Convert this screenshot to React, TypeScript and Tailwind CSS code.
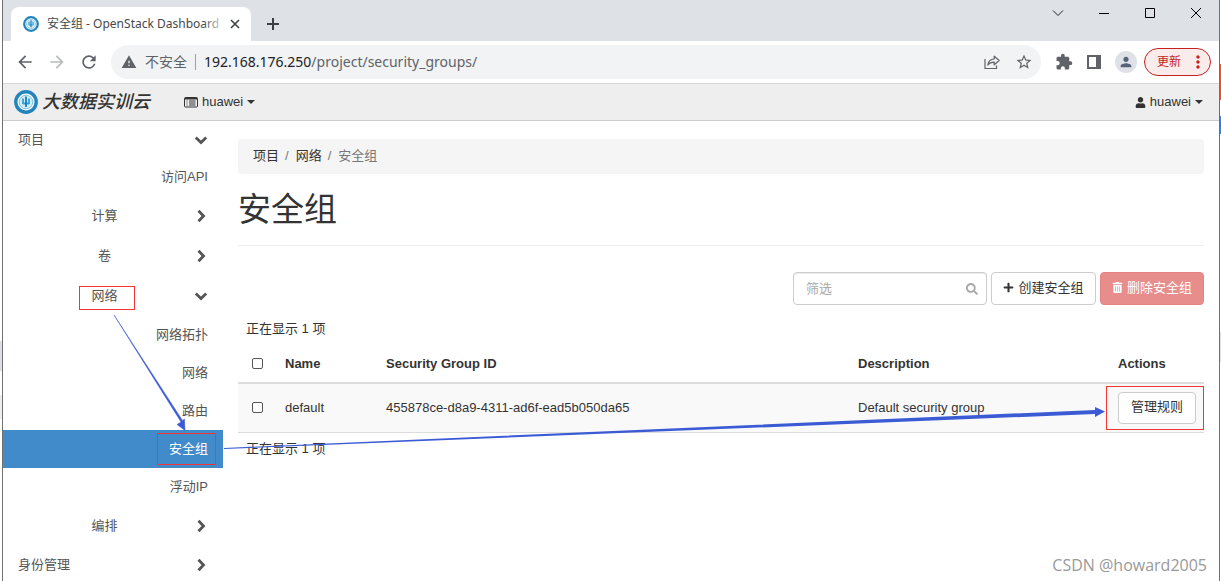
import React from 'react'
import { FaPlus, FaSearch, FaTrashAlt, FaUser } from 'react-icons/fa'
import {
  MdArrowBack,
  MdArrowForward,
  MdExtension,
  MdMoreVert,
  MdPerson,
  MdRefresh,
  MdStarOutline,
  MdWarning,
} from 'react-icons/md'

interface INavItem {
  label: string
  level: 'top' | 'group' | 'leaf'
  open?: boolean
  active?: boolean
  marked?: boolean
}

const navItems: INavItem[] = [
  { label: '项目', level: 'top', open: true },
  { label: '访问API', level: 'leaf' },
  { label: '计算', level: 'group' },
  { label: '卷', level: 'group' },
  { label: '网络', level: 'group', open: true, marked: true },
  { label: '网络拓扑', level: 'leaf' },
  { label: '网络', level: 'leaf' },
  { label: '路由', level: 'leaf' },
  { label: '安全组', level: 'leaf', active: true, marked: true },
  { label: '浮动IP', level: 'leaf' },
  { label: '编排', level: 'group' },
  { label: '身份管理', level: 'top' },
]

const groups = [
  {
    id: '455878ce-d8a9-4311-ad6f-ead5b050da65',
    name: 'default',
    description: 'Default security group',
  },
]

const Logo: React.FC<{ className: string }> = ({ className }) => (
  <svg viewBox="0 0 24 24" className={className} aria-hidden="true">
    <circle cx="12" cy="12" r="10.2" fill="#fff" stroke="#2484bd" strokeWidth="3.4" />
    <circle cx="12" cy="12" r="6.800" fill="#d3ecf7" stroke="#7cc3e4" strokeWidth="1" />
    <path d="M9 8.500v5.500M15 8.500v5.500M9 13.500h6" fill="none" stroke="#2ba3da" strokeWidth="1.8" />
    <path d="M12 6.500v10.500" stroke="#1b79b5" strokeWidth="1.8" />
  </svg>
)

const ListIcon = () => (
  <svg viewBox="0 0 14 12" className="h-3 w-3.5" fill="none" stroke="#333" aria-hidden="true">
    <rect x=".5" y="1.5" width="13" height="9.5" rx="1" />
    <path d="M1 2.5h12" strokeWidth="2" />
    <path d="M2.500 5h1M5 5h6.500M2.500 7h1M5 7h6.500M2.500 9h1M5 9h6.500" />
  </svg>
)

const ShareIcon = () => (
  <svg viewBox="0 0 18 18" className="size-[18px]" fill="none" stroke="#5f6368" strokeWidth="1.2" aria-hidden="true">
    <path d="M2 6v9.500h11.500v-3" />
    <path d="M4.800 12c.5-3.700 2.600-5.800 6.400-6V3.200L16.200 7.500l-5 4.300V9.200c-3 0-5 .8-6.400 2.800z" strokeLinejoin="round" />
  </svg>
)

const Chevron: React.FC<{ open?: boolean }> = ({ open }) => (
  <svg viewBox="0 0 14 14" className="size-3.5" fill="none" stroke="#555" strokeWidth="2.8" aria-hidden="true">
    <path d={open ? 'M1.800 4.500l5.200 5 5.200-5' : 'M4.500 1.800l5 5.200-5 5.200'} />
  </svg>
)

const Caret = () => (
  <svg viewBox="0 0 8 4" className="h-1 w-2" fill="#333" aria-hidden="true">
    <path d="M0 0h8L4 4z" />
  </svg>
)

const TitleBar = () => (
  <div className="flex h-[41px] shrink-0 items-end bg-[#dee1e6] pl-2">
    <div className="flex h-[34px] w-60 items-center rounded-t-lg bg-white pl-3 pr-2 text-xs text-[#45484c]">
      <Logo className="size-4 shrink-0" />
      <span className="relative ml-2 flex-1 overflow-hidden whitespace-nowrap">
        安全组 - OpenStack Dashboard
        <span className="absolute inset-y-0 right-0 w-6 bg-linear-to-r from-transparent to-white" />
      </span>
      <button aria-label="Close tab" className="p-[3px]">
        <svg viewBox="0 0 10 10" className="size-2.5" stroke="#3c4043" strokeWidth="1.6">
          <path d="M1 1l8 8M9 1l-8 8" />
        </svg>
      </button>
    </div>
    <button aria-label="New tab" className="flex h-[34px] w-11 items-center justify-center">
      <svg viewBox="0 0 12 12" className="size-3" stroke="#3c4043" strokeWidth="2">
        <path d="M6 0v12M0 6h12" />
      </svg>
    </button>
    <div className="ml-auto flex self-start text-black">
      <button aria-label="Search tabs" className="flex h-[26px] w-[46px] items-center justify-center">
        <svg viewBox="0 0 12 12" className="size-3" fill="none" stroke="#222">
          <path d="M1 3.500l5 5 5-5" />
        </svg>
      </button>
      <button aria-label="Minimize" className="flex h-[26px] w-[46px] items-center justify-center">
        <svg viewBox="0 0 10 10" className="size-2.5" stroke="#000">
          <path d="M0 5.500h10" />
        </svg>
      </button>
      <button aria-label="Maximize" className="flex h-[26px] w-[46px] items-center justify-center">
        <svg viewBox="0 0 10 10" className="size-2.5" fill="none" stroke="#000">
          <path d="M.5.5h9v9h-9z" />
        </svg>
      </button>
      <button aria-label="Close" className="flex h-[26px] w-[46px] items-center justify-center">
        <svg viewBox="0 0 10 10" className="size-2.5" stroke="#000">
          <path d="M0 0l10 10M10 0L0 10" />
        </svg>
      </button>
    </div>
  </div>
)

const AddressBar = () => (
  <div className="flex h-[43px] shrink-0 items-center border-b border-[#d5d7da] bg-white pl-3 pr-2 text-[#5f6368]">
    <div className="flex gap-3 pr-3">
      <button aria-label="Back"><MdArrowBack size={20} /></button>
      <button aria-label="Forward" className="text-[#b9bbbe]"><MdArrowForward size={20} /></button>
      <button aria-label="Reload"><MdRefresh size={20} /></button>
    </div>
    <div className="flex h-[34px] flex-1 items-center rounded-full bg-[#f1f3f4] pl-2.5 pr-2">
      <MdWarning size={16} />
      <span className="ml-2 text-sm">不安全</span>
      <span className="mx-2 h-4 w-px bg-[#9aa0a6]" />
      <span className="flex-1 text-sm">
        <span className="text-[#202124]">192.168.176.250</span>/project/security_groups/
      </span>
      <button aria-label="Share" className="mr-3.5"><ShareIcon /></button>
      <button aria-label="Bookmark"><MdStarOutline size={18} /></button>
    </div>
    <div className="flex items-center gap-3.5 pl-3.5">
      <button aria-label="Extensions"><MdExtension size={18} /></button>
      <button aria-label="Side panel">
        <svg viewBox="0 0 14 14" className="size-3.5" fill="none" stroke="#5f6368" strokeWidth="2">
          <path d="M1 1h12v12H1z" />
          <path d="M11 1v12" strokeWidth="4" />
        </svg>
      </button>
      <button aria-label="Profile" className="rounded-full bg-[#dee1e6] p-[3px] text-[#56627a]">
        <MdPerson size={16} />
      </button>
    </div>
    <button className="ml-[7px] flex h-7 items-center rounded-full border border-[#c5221f] bg-[#faeceb] pl-3 pr-0.5 text-xs text-[#c5221f]">
      更新
      <MdMoreVert size={20} className="ml-[7px]" />
    </button>
  </div>
)

const Header = () => (
  <header className="flex h-[37px] shrink-0 items-center border-b border-[#ccc] bg-[#eee] pl-[11px] pr-4 font-['Liberation_Sans','Noto_Sans_CJK_SC',sans-serif] text-[13px] text-[#333]">
    <a href="#" className="flex items-center gap-1 text-lg font-medium italic">
      <Logo className="size-6" />
      大数据实训云
    </a>
    <button className="ml-[34px] flex items-center gap-1">
      <ListIcon />
      huawei
      <Caret />
    </button>
    <button className="ml-auto flex items-center gap-1">
      <FaUser size={11} />
      huawei
      <Caret />
    </button>
  </header>
)

const Sidebar = () => (
  <nav className="w-[220px] shrink-0 text-[#555]">
    {navItems.map((item, index) => {
      if (item.level === 'leaf') {
        return (
          <a
            key={index}
            href="#"
            className={`flex h-[38px] items-center justify-end pr-[15px] ${
              item.active ? 'bg-[#428bca] text-white' : ''
            }`}
          >
            <span className="relative">
              {item.label}
              {item.marked && (
                <span className="absolute -inset-y-1.5 -left-3 -right-2 border border-[#f53535]" />
              )}
            </span>
          </a>
        )
      }
      return (
        <button
          key={index}
          className={`flex w-full items-center justify-between pr-[15px] ${
            item.level === 'top' ? 'h-[37px] pl-[15px]' : 'h-10 pl-[75px]'
          }`}
        >
          <span className={item.level === 'group' ? 'relative w-[53px] text-center' : ''}>
            {item.label}
            {item.marked && (
              <span className="absolute -bottom-1 -right-1 left-px top-0 border border-[#f53535]" />
            )}
          </span>
          <Chevron open={item.open} />
        </button>
      )
    })}
  </nav>
)

const GroupsTable = () => (
  <table className="mt-1.5 w-full table-fixed text-left">
    <colgroup>
      <col className="w-[39px]" />
      <col className="w-[101px]" />
      <col />
      <col className="w-[260px]" />
      <col className="w-[94px]" />
    </colgroup>
    <thead>
      <tr className="h-[38px] border-b-2 border-[#ddd]">
        <th className="pl-3.5">
          <input
            type="checkbox"
            aria-label="Select all"
            className="block size-[11px] appearance-none rounded-[2px] border border-[#555] bg-white"
          />
        </th>
        <th className="px-2">Name</th>
        <th className="px-2">Security Group ID</th>
        <th className="px-2">Description</th>
        <th className="px-2">Actions</th>
      </tr>
    </thead>
    <tbody>
      {groups.map((group) => (
        <tr key={group.id} className="h-[49px] border-b border-[#ddd] bg-[#f9f9f9]">
          <td className="pl-3.5">
            <input
              type="checkbox"
              aria-label={`Select ${group.name}`}
              className="block size-[11px] appearance-none rounded-[2px] border border-[#555] bg-white"
            />
          </td>
          <td className="px-2">{group.name}</td>
          <td className="px-2">{group.id}</td>
          <td className="px-2">{group.description}</td>
          <td className="px-2">
            <span className="relative block">
              <button className="h-8 w-full rounded border border-[#ccc] bg-white pb-0.5">
                管理规则
              </button>
              <span className="pointer-events-none absolute -inset-y-1.5 -left-3 -right-2 border border-[#f53535]" />
            </span>
          </td>
        </tr>
      ))}
    </tbody>
  </table>
)

const Arrows = () => (
  <svg
    width="1221"
    height="581"
    viewBox="0 0 1221 581"
    fill="#3a5bd4"
    className="pointer-events-none absolute left-0 top-0"
    aria-hidden="true"
  >
    <path d="M114 315 L181 422 L177 424.500 L185 430.500 L184.500 419 L182.500 420.500 Z" stroke="#3a5bd4" strokeWidth=".5" />
    <path d="M224 448 L1095 410 L1095 407 L1105 411.500 L1095 417 L1095 414 L224 449 Z" />
  </svg>
)

// other windows showing past the browser's edges
const LeftEdge = () => (
  <div className="w-0.5 shrink-0 bg-white">
    <div className="mt-[341px] h-[30px] bg-[#dcdfe4]" />
    <div className="mt-6 h-6 bg-[#eee]" />
  </div>
)

const RightEdge = () => (
  <div className="w-px shrink-0 bg-white">
    <div className="mt-16 h-9 bg-[#f0512d]" />
    <div className="mt-4 h-[18px] bg-[#3b7de0]" />
    <div className="mt-[198px] h-[30px] bg-[#dcdfe4]" />
  </div>
)

const App: React.FC = () => {
  return (
    <div className="relative flex h-screen overflow-hidden bg-white font-['Noto_Sans','Noto_Sans_CJK_SC',sans-serif]">
      <LeftEdge />
      <div className="flex min-w-0 flex-1 flex-col border-x border-[#707070]">
        <TitleBar />
        <AddressBar />
        <Header />
        <div className="flex min-h-0 flex-1 font-['Liberation_Sans','Noto_Sans_CJK_SC',sans-serif] text-[13px] leading-5 text-[#333]">
          <Sidebar />
          <main className="min-w-0 flex-1 px-[15px] pt-[18px]">
            <ol className="flex h-[35px] items-center rounded bg-[#f5f5f5] px-[15px] pb-0.5 text-[#777]">
              <li><a href="#" className="text-[#333]">项目</a></li>
              <li className="px-[7px] pl-1.5">/</li>
              <li><a href="#" className="text-[#333]">网络</a></li>
              <li className="px-[7px] pl-1.5">/</li>
              <li>安全组</li>
            </ol>
            <div className="mt-[18px] border-b border-[#eee] pb-[17px]">
              <h1 className="text-[33px] leading-9">安全组</h1>
            </div>
            <div className="mt-[26px] flex justify-end gap-1">
              <label className="flex h-[33px] w-[194px] items-center rounded border border-[#ccc] px-2 pl-3 shadow-[inset_0_1px_1px_rgba(0,0,0,0.075)]">
                <input
                  type="text"
                  placeholder="筛选"
                  aria-label="筛选"
                  className="min-w-0 flex-1 outline-none placeholder:text-[#aaa]"
                />
                <FaSearch size={12} className="text-[#aaa]" />
              </label>
              <button className="flex h-[33px] w-[105px] items-center justify-center gap-1 rounded border border-[#ccc] bg-white pb-0.5">
                <FaPlus size={11} />
                创建安全组
              </button>
              <button className="flex h-[33px] w-[104px] items-center justify-center gap-1 rounded border border-[#e48281] bg-[#e78e8c] pb-0.5 text-white">
                <FaTrashAlt size={11} />
                删除安全组
              </button>
            </div>
            <p className="mt-3.5 px-2">正在显示 1 项</p>
            <GroupsTable />
            <p className="mt-1.5 px-2">正在显示 1 项</p>
          </main>
        </div>
      </div>
      <RightEdge />
      <Arrows />
      <p className="absolute bottom-1 right-3.5 font-['Open_Sans',sans-serif] text-base text-[#999]">
        CSDN @howard2005
      </p>
    </div>
  )
}

export default App
